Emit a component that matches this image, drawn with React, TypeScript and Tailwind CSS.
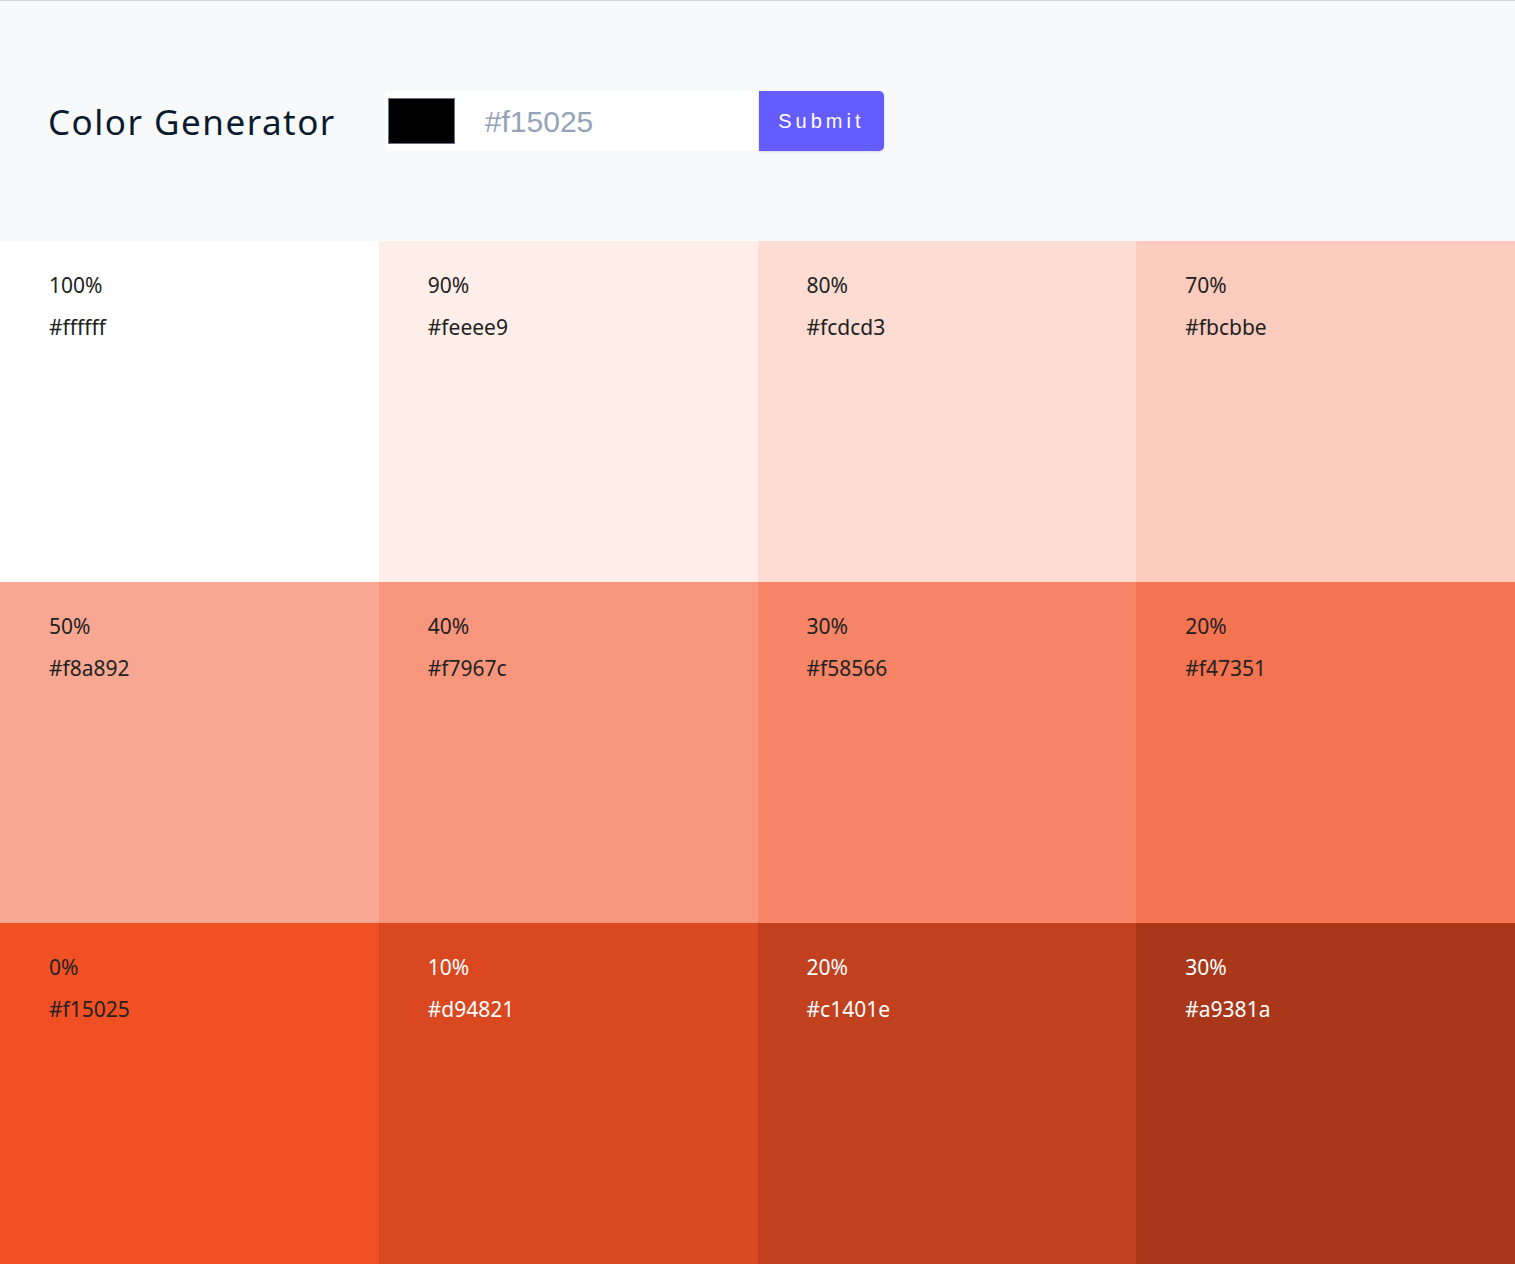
import * as React from "react";

type Swatch = { weight: string; hex: string; light?: boolean };

const swatches: Swatch[] = [
  { weight: "100%", hex: "#ffffff" },
  { weight: "90%", hex: "#feeee9" },
  { weight: "80%", hex: "#fcdcd3" },
  { weight: "70%", hex: "#fbcbbe" },
  { weight: "50%", hex: "#f8a892" },
  { weight: "40%", hex: "#f7967c" },
  { weight: "30%", hex: "#f58566" },
  { weight: "20%", hex: "#f47351" },
  { weight: "0%", hex: "#f15025" },
  { weight: "10%", hex: "#d94821", light: true },
  { weight: "20%", hex: "#c1401e", light: true },
  { weight: "30%", hex: "#a9381a", light: true },
];

export default function App() {
  return (
    <main
      className="min-h-screen bg-white border-t border-gray-300"
      style={{ fontFamily: '"Noto Sans", "Open Sans", sans-serif' }}
    >
      <section className="h-[240px] bg-[#f8f9fb] flex items-center pl-[48px]">
        <h3 className="text-[35px] tracking-[1.5px] text-[#0b1a2e] leading-none mr-[49px]">
          Color Generator
        </h3>
        <form className="flex items-center" onSubmit={(e) => e.preventDefault()}>
          <div className="flex items-center h-[60px] w-[374px] bg-white">
            <div className="ml-[3px] w-[67px] h-[46px] bg-black border border-gray-500" />
            <input
              type="text"
              placeholder="#f15025"
              className="ml-[30px] w-[260px] bg-transparent outline-none text-[30px] text-[#617d98] placeholder:text-[#94a3b8]"
              style={{ fontFamily: '"Liberation Sans", Arial, sans-serif' }}
            />
          </div>
          <button
            type="submit"
            className="h-[60px] w-[125px] bg-[#645cff] text-white text-[20px] tracking-[4px] rounded-r-[5px] shadow-sm"
            style={{ fontFamily: '"Liberation Sans", Arial, sans-serif' }}
          >
            Submit
          </button>
        </form>
      </section>

      <section className="grid grid-cols-4">
        {swatches.map((s, i) => (
          <article
            key={i}
            className={`h-[341px] pl-[49px] pt-[30px] ${s.light ? "text-white" : "text-[#222]"}`}
            style={{ backgroundColor: s.hex }}
          >
            <p className="text-[21px] leading-[28px] mb-[14px]">{s.weight}</p>
            <p className="text-[21px] leading-[28px]">{s.hex}</p>
          </article>
        ))}
      </section>
    </main>
  );
}
